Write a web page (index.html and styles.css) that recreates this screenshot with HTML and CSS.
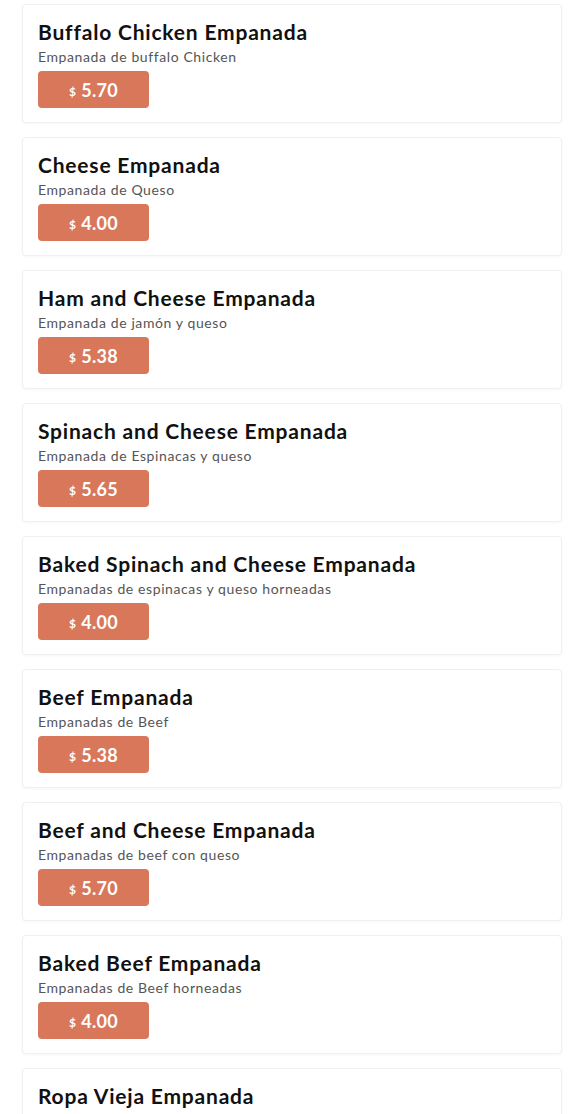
FILE: index.html
```html
<!DOCTYPE html>
<html lang="es">
<head>
  <meta charset="UTF-8" />
  <meta name="viewport" content="width=device-width, initial-scale=1.0" />
  <title>Empanadas</title>
  <link rel="stylesheet" href="styles.css">
</head>
<body>
  <div class="menu">
    <div class="item">
      <h3 class="item-name">Buffalo Chicken Empanada</h3>
      <p class="item-desc">Empanada de buffalo Chicken</p>
      <div class="price"><span class="cur">$</span>5.70</div>
    </div>
    <div class="item">
      <h3 class="item-name">Cheese Empanada</h3>
      <p class="item-desc">Empanada de Queso</p>
      <div class="price"><span class="cur">$</span>4.00</div>
    </div>
    <div class="item">
      <h3 class="item-name">Ham and Cheese Empanada</h3>
      <p class="item-desc">Empanada de jamón y queso</p>
      <div class="price"><span class="cur">$</span>5.38</div>
    </div>
    <div class="item">
      <h3 class="item-name">Spinach and Cheese Empanada</h3>
      <p class="item-desc">Empanada de Espinacas y queso</p>
      <div class="price"><span class="cur">$</span>5.65</div>
    </div>
    <div class="item">
      <h3 class="item-name">Baked Spinach and Cheese Empanada</h3>
      <p class="item-desc">Empanadas de espinacas y queso horneadas</p>
      <div class="price"><span class="cur">$</span>4.00</div>
    </div>
    <div class="item">
      <h3 class="item-name">Beef Empanada</h3>
      <p class="item-desc">Empanadas de Beef</p>
      <div class="price"><span class="cur">$</span>5.38</div>
    </div>
    <div class="item">
      <h3 class="item-name">Beef and Cheese Empanada</h3>
      <p class="item-desc">Empanadas de beef con queso</p>
      <div class="price"><span class="cur">$</span>5.70</div>
    </div>
    <div class="item">
      <h3 class="item-name">Baked Beef Empanada</h3>
      <p class="item-desc">Empanadas de Beef horneadas</p>
      <div class="price"><span class="cur">$</span>4.00</div>
    </div>
    <div class="item">
      <h3 class="item-name">Ropa Vieja Empanada</h3>
    </div>
  </div>
</body>
</html>
```

FILE: styles.css
```css
*{margin:0;padding:0;box-sizing:border-box;}
html,body{width:100%;background:#fff;font-family:Lato,'Open Sans',sans-serif;color:#111;}

.menu{display:flex;flex-direction:column;gap:14px;padding:4px 23px 0 22px;}

.item{height:119px;padding:14px 15px 0;background:#fff;border:1px solid #f0f0f0;border-radius:4px;box-shadow:0 1px 3px rgba(0,0,0,0.04);}
.item-name{font-size:21px;font-weight:700;line-height:26px;color:#111;letter-spacing:0.8px;}
.item-desc{font-size:14px;line-height:18px;color:#555;margin-top:3px;letter-spacing:0.6px;}

.price{display:inline-flex;align-items:center;justify-content:center;gap:5px;min-width:111px;height:37px;margin-top:5px;padding:0 30px;border-radius:4px;background:#d8775a;color:#fff;font-size:18px;font-weight:700;letter-spacing:0.3px;}
.cur{font-size:12px;margin-top:3px;}
```
